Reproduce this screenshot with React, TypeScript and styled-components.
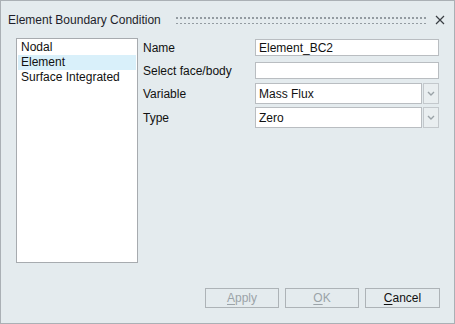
import React from "react";
import styled, { createGlobalStyle } from "styled-components";

const Global = createGlobalStyle`
  html, body { margin: 0; padding: 0; background: #e4ebee; }
  body { font-family: "Liberation Sans", Arial, sans-serif; font-size: 12px; color: #1a1a1a; }
`;

const Window = styled.div`
  width: 455px;
  height: 324px;
  box-sizing: border-box;
  border: 1px solid #aab0b5;
  background: #e4ebee;
  display: flex;
  flex-direction: column;
`;

const TitleBar = styled.div`
  height: 37px;
  display: flex;
  align-items: center;
  padding: 0 8px 0 7px;
`;

const Title = styled.div`
  font-size: 12px;
  color: #1e1e2a;
  white-space: nowrap;
  margin-right: 14px;
`;

const Grip = styled.div`
  flex: 1;
  height: 8px;
  margin-right: 8px;
  background-image: radial-gradient(circle, #939ba1 0.8px, transparent 1px);
  background-size: 4px 6px;
  background-position: 0 -1px;
`;

const CloseBtn = styled.div`
  width: 12px;
  height: 12px;
  display: flex;
  align-items: center;
  justify-content: center;
`;

const Body = styled.div`
  flex: 1;
  display: flex;
  padding: 0 14px 0 15px;
  gap: 5px;
`;

const List = styled.div`
  width: 122px;
  height: 225px;
  box-sizing: border-box;
  background: #fff;
  border: 1px solid #a7abaf;
  padding: 1px 1px 0;
  display: flex;
  flex-direction: column;
`;

const ListItem = styled.div<{ $selected?: boolean }>`
  height: 15px;
  line-height: 15px;
  padding-left: 3px;
  background: ${(p) => (p.$selected ? "#d9f0fa" : "transparent")};
  color: #111;
`;

const Form = styled.div`
  display: grid;
  grid-template-columns: 112px 184px;
  align-content: start;
`;

const Label = styled.div<{ $mt: number; $h: number }>`
  margin-top: ${(p) => p.$mt}px;
  height: ${(p) => p.$h}px;
  display: flex;
  align-items: center;
  color: #111;
`;

const TextField = styled.div<{ $mt: number }>`
  margin-top: ${(p) => p.$mt}px;
  height: 17px;
  box-sizing: border-box;
  border: 1px solid #b9bdc1;
  background: #fff;
  display: flex;
  align-items: center;
  padding-left: 3px;
  color: #111;
`;

const Select = styled.div<{ $mt: number }>`
  margin-top: ${(p) => p.$mt}px;
  height: 21px;
  display: flex;
  gap: 1px;
`;

const SelectValue = styled.div`
  flex: 1;
  box-sizing: border-box;
  border: 1px solid #b9bdc1;
  background: #fff;
  display: flex;
  align-items: center;
  padding-left: 3px;
  color: #111;
`;

const SelectArrow = styled.div`
  width: 16px;
  box-sizing: border-box;
  border: 1px solid #c3c8cc;
  background: #e9eef0;
  display: flex;
  align-items: center;
  justify-content: center;
`;

const Footer = styled.div`
  height: 35px;
  display: flex;
  justify-content: flex-end;
  align-items: flex-start;
  padding: 0 14px 0 0;
  gap: 6px;
  box-sizing: border-box;
`;

const Button = styled.div<{ $disabled?: boolean; $w: number }>`
  width: ${(p) => p.$w}px;
  height: 20px;
  box-sizing: border-box;
  border: 1px solid #adb3b7;
  background: #e4ebee;
  display: flex;
  align-items: center;
  justify-content: center;
  color: ${(p) => (p.$disabled ? "#9ba3a8" : "#111")};
  u { text-decoration: underline; text-underline-offset: 2px; }
`;

const Chevron = () => (
  <svg width="8" height="6" viewBox="0 0 8 6">
    <path d="M1 1 L4 4 L7 1" fill="none" stroke="#9aa2a7" strokeWidth="1.4" />
  </svg>
);

const CloseIcon = () => (
  <svg width="10" height="10" viewBox="0 0 10 10">
    <path d="M1 1 L9 9 M9 1 L1 9" stroke="#3a3f44" strokeWidth="1.2" />
  </svg>
);

export default function App() {
  return (
    <>
      <Global />
      <Window>
        <TitleBar>
          <Title>Element Boundary Condition</Title>
          <Grip />
          <CloseBtn>
            <CloseIcon />
          </CloseBtn>
        </TitleBar>
        <Body>
          <List>
            <ListItem>Nodal</ListItem>
            <ListItem $selected>Element</ListItem>
            <ListItem>Surface Integrated</ListItem>
          </List>
          <Form>
            <Label $mt={1} $h={17}>Name</Label>
            <TextField $mt={1}>Element_BC2</TextField>
            <Label $mt={6} $h={17}>Select face/body</Label>
            <TextField $mt={6} />
            <Label $mt={4} $h={21}>Variable</Label>
            <Select $mt={4}>
              <SelectValue>Mass Flux</SelectValue>
              <SelectArrow>
                <Chevron />
              </SelectArrow>
            </Select>
            <Label $mt={3} $h={21}>Type</Label>
            <Select $mt={3}>
              <SelectValue>Zero</SelectValue>
              <SelectArrow>
                <Chevron />
              </SelectArrow>
            </Select>
          </Form>
        </Body>
        <Footer>
          <Button $disabled $w={74}>
            <span><u>A</u>pply</span>
          </Button>
          <Button $disabled $w={74}>
            <span><u>O</u>K</span>
          </Button>
          <Button $w={75}>
            <span><u>C</u>ancel</span>
          </Button>
        </Footer>
      </Window>
    </>
  );
}
